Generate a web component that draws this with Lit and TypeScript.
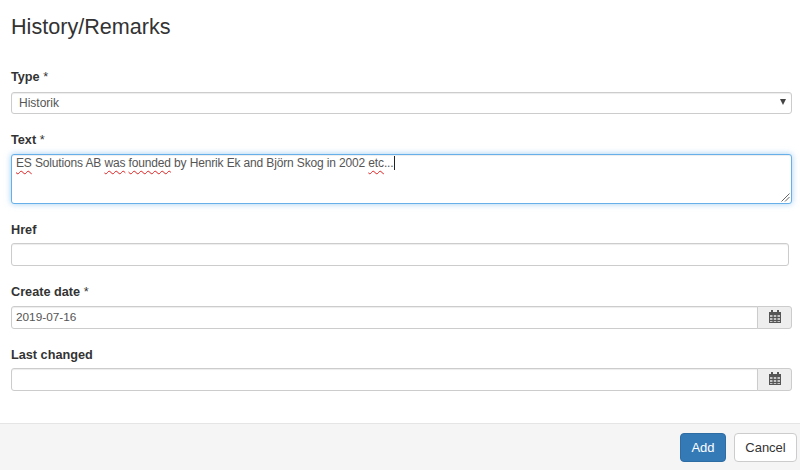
import { LitElement, html, css, svg } from "lit";
import { customElement } from "lit/decorators.js";

const calendar = svg`<svg class="cal" width="12" height="13" viewBox="0 0 12 13" aria-hidden="true">
  <path fill="#555" d="M0 2h12v11H0z"/>
  <path fill="#555" d="M2 0h2v3H2zM8 0h2v3H8z"/>
  <path fill="#c4c4c4" d="M1 5h2.5v2H1zM4.75 5h2.5v2h-2.5zM8.5 5H11v2H8.5zM1 8h2.5v2H1zM4.75 8h2.5v2h-2.5zM8.5 8H11v2H8.5zM1 11h2.5v1H1zM4.75 11h2.5v1h-2.5zM8.5 11H11v1H8.5z"/>
</svg>`;

@customElement("app-root")
export class AppRoot extends LitElement {
  static styles = css`
    :host {
      display: flex;
      flex-direction: column;
      width: 800px;
      height: 470px;
      overflow: hidden;
      background: #fff;
      font-family: "Liberation Sans", Arial, sans-serif;
      font-size: 12px;
      color: #333;
      box-sizing: border-box;
    }
    h1 {
      margin: 0;
      padding: 14px 11px 0;
      height: 69px;
      box-sizing: border-box;
      font-size: 21.6px;
      line-height: 26px;
      font-weight: 400;
      color: #333;
    }
    form {
      flex: 1;
      padding: 0 8px 0 11px;
      display: flex;
      flex-direction: column;
    }
    label {
      display: block;
      font-size: 12.7px;
      font-weight: 700;
      line-height: 16px;
      height: 16px;
      margin-bottom: 7px;
    }
    label.down1 { margin-top: 1px; margin-bottom: 6px; }
    label.down2 { margin-top: 2px; margin-bottom: 5px; }
    .req { font-weight: 400; }
    .box {
      box-sizing: border-box;
      height: 23px;
      border: 1px solid #ccc;
      border-radius: 3px;
      background: #fff;
      box-shadow: inset 0 1px 1px rgba(0,0,0,.075);
      color: #555;
      font-size: 11.8px;
      line-height: 21px;
      padding: 0 4px;
    }
    .select {
      position: relative;
      height: 22px;
      padding-left: 7px;
      line-height: 20px;
      font-size: 12px;
    }
    .arrow {
      position: absolute;
      right: 5px;
      top: 6px;
      width: 0;
      height: 0;
      border-left: 3px solid transparent;
      border-right: 3px solid transparent;
      border-top: 6px solid #444;
    }
    .textarea {
      position: relative;
      height: 50px;
      border-color: #66afe9;
      box-shadow: inset 0 1px 1px rgba(0,0,0,.075), 0 0 6px rgba(102,175,233,.6);
      font-size: 12px;
      letter-spacing: -0.145px;
      line-height: 17px;
    }
    .sp {
      text-decoration: underline wavy #e02020;
      text-decoration-thickness: 1px;
      text-underline-offset: 3px;
    }
    .caret {
      display: inline-block;
      width: 1px;
      height: 14px;
      margin-left: 1px;
      background: #222;
      vertical-align: -3px;
    }
    .grip { position: absolute; right: 1px; bottom: 1px; }
    .href { margin-right: 3px; }
    .input-group { display: flex; }
    .input-group .box {
      flex: 1;
      border-radius: 3px 0 0 3px;
    }
    .addon {
      box-sizing: border-box;
      width: 35px;
      height: 23px;
      margin-left: -1px;
      display: flex;
      align-items: center;
      justify-content: center;
      background: #eee;
      border: 1px solid #ccc;
      border-radius: 0 3px 3px 0;
    }
    .cal { margin-bottom: 3px; }
    .gap-17 { margin-bottom: 17px; }
    .gap-16 { margin-bottom: 16px; }
    footer {
      box-sizing: border-box;
      height: 47px;
      background: #f5f5f5;
      border-top: 1px solid #e5e5e5;
      display: flex;
      justify-content: flex-end;
      align-items: flex-start;
      gap: 8px;
      padding: 9px 3px 0 0;
    }
    button {
      font: inherit;
      font-size: 13px;
      height: 29px;
      padding: 0;
      border-radius: 4px;
      border: 1px solid #ccc;
      background: #fff;
      color: #333;
    }
    .primary {
      width: 46px;
      background: #337ab7;
      border-color: #2e6da4;
      color: #fff;
    }
    .cancel { width: 63px; }
  `;

  render() {
    return html`
      <h1>History/Remarks</h1>
      <form>
        <div class="gap-17">
          <label>Type <span class="req">*</span></label>
          <div class="box select">Historik<span class="arrow"></span></div>
        </div>
        <div class="gap-16">
          <label class="down1">Text <span class="req">*</span></label>
          <div class="box textarea"><span class="sp">ES</span> Solutions AB <span class="sp">was</span> <span class="sp">founded</span> by Henrik Ek and Björn Skog in 2002 <span class="sp">etc</span>...<span class="caret"></span>
            <svg class="grip" width="9" height="9" viewBox="0 0 9 9" aria-hidden="true"><path d="M0.5 8.5 8.5 0.5M4 8.5 8.5 4" stroke="#666" stroke-width="1" fill="none"/></svg>
          </div>
        </div>
        <div class="gap-17">
          <label class="down2">Href</label>
          <div class="box href"></div>
        </div>
        <div class="gap-16">
          <label class="down1">Create date <span class="req">*</span></label>
          <div class="input-group"><div class="box">2019-07-16</div><div class="addon">${calendar}</div></div>
        </div>
        <div>
          <label class="down2">Last changed</label>
          <div class="input-group"><div class="box"></div><div class="addon">${calendar}</div></div>
        </div>
      </form>
      <footer>
        <button class="primary" type="button">Add</button>
        <button class="cancel" type="button">Cancel</button>
      </footer>
    `;
  }
}
